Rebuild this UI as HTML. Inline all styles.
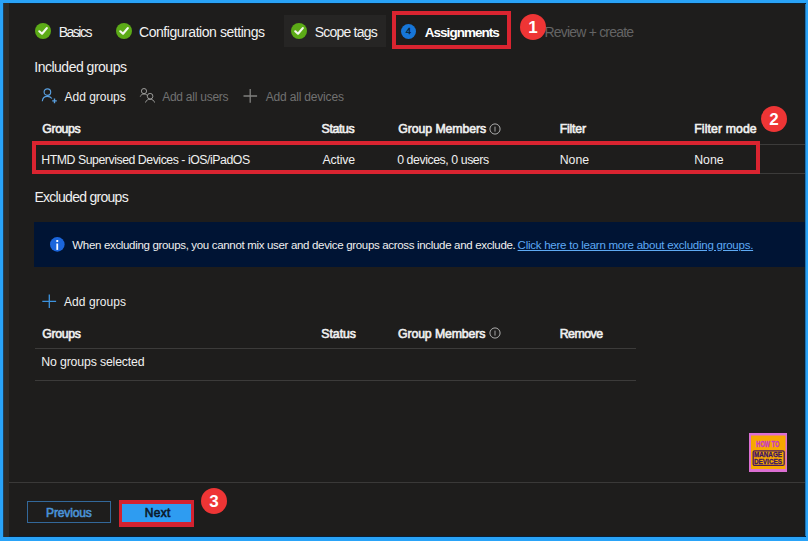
<!DOCTYPE html>
<html><head><meta charset="utf-8"><style>
html,body{margin:0;padding:0;}
body{width:808px;height:541px;background:#29a3f8;position:relative;overflow:hidden;font-family:"Liberation Sans",sans-serif;}
.t{position:absolute;white-space:nowrap;font-family:"Liberation Sans",sans-serif;}
.c{position:absolute;border-radius:50%;}
.b{position:absolute;}
.s{position:absolute;display:block;}
a{color:inherit;text-decoration:underline;}
</style></head><body>
<div class="b" style="left:3px;top:3px;width:803px;height:534px;background:#1e1d1c"></div>
<div class="b" style="left:804px;top:3px;width:1px;height:534px;background:#0c1e2c"></div>
<div class="b" style="left:805px;top:3px;width:1px;height:534px;background:#2a74ab"></div>
<div class="b" style="left:3px;top:3px;width:803px;height:1px;background:#0e2232"></div>
<div class="b" style="left:3px;top:536px;width:803px;height:1px;background:#07213a"></div>
<div class="b" style="left:3px;top:3px;width:1px;height:534px;background:#1c3d57"></div>
<div class="b" style="left:4px;top:3px;width:5px;height:534px;background:#2d2b28"></div>
<div class="b" style="left:284px;top:15px;width:102px;height:32px;background:#262524"></div>
<div class="c" style="left:34.80px;top:23.10px;width:16.40px;height:16.40px;background:#5cab17"></div><svg class="s" style="left:35.00px;top:23.30px" width="16" height="16" viewBox="0 0 16 16"><path d="M4.3 8.3 L7 10.7 L11.8 5.1" fill="none" stroke="#f4f8ee" stroke-width="2.2" stroke-linecap="round" stroke-linejoin="round"/></svg>
<div class="c" style="left:115.50px;top:23.10px;width:16.40px;height:16.40px;background:#5cab17"></div><svg class="s" style="left:115.70px;top:23.30px" width="16" height="16" viewBox="0 0 16 16"><path d="M4.3 8.3 L7 10.7 L11.8 5.1" fill="none" stroke="#f4f8ee" stroke-width="2.2" stroke-linecap="round" stroke-linejoin="round"/></svg>
<div class="c" style="left:291.10px;top:23.10px;width:16.40px;height:16.40px;background:#5cab17"></div><svg class="s" style="left:291.30px;top:23.30px" width="16" height="16" viewBox="0 0 16 16"><path d="M4.3 8.3 L7 10.7 L11.8 5.1" fill="none" stroke="#f4f8ee" stroke-width="2.2" stroke-linecap="round" stroke-linejoin="round"/></svg>
<div class="c" style="left:400.60px;top:23.60px;width:15.60px;height:15.60px;background:#1776d8"></div>
<div class="t" style="left:403.4px;top:24.6px;width:10px;text-align:center;font-size:9.5px;line-height:11px;font-weight:400;color:#0a1a2b;-webkit-text-stroke:0.3px #0a1a2b">4</div>
<div class="b" style="left:392px;top:11px;width:111px;height:30px;border:4px solid #da2430"></div>
<div class="b" style="left:35px;top:144px;width:770px;height:1px;background:#3c3b3a"></div>
<div class="b" style="left:35px;top:173px;width:770px;height:1px;background:#3c3b3a"></div>
<div class="b" style="left:35px;top:348px;width:601px;height:1px;background:#3c3b3a"></div>
<div class="b" style="left:35px;top:380px;width:601px;height:1px;background:#3c3b3a"></div>
<div class="b" style="left:9px;top:482px;width:796px;height:1px;background:#3a3938"></div>
<div class="b" style="left:32px;top:141px;width:720px;height:25px;border:4px solid #da2430"></div>
<div class="b" style="left:34px;top:222px;width:771px;height:45px;background:#001434"></div>
<svg class="s" style="left:49px;top:236px" width="17" height="17" viewBox="0 0 17 17"><circle cx="8.3" cy="8.4" r="7.3" fill="#1b66dc"/><rect x="7.2" y="3.9" width="2.1" height="2" rx="0.6" fill="#fff"/><rect x="7.35" y="7.5" width="1.8" height="6.4" fill="#fff"/></svg>
<svg class="s" style="left:488.5px;top:122.6px" width="12" height="12" viewBox="0 0 12 12"><circle cx="6" cy="6" r="5.1" fill="none" stroke="#b4b4b4" stroke-width="0.95"/><rect x="5.55" y="3.6" width="0.9" height="5" fill="#b4b4b4"/></svg>
<svg class="s" style="left:488.5px;top:327.4px" width="12" height="12" viewBox="0 0 12 12"><circle cx="6" cy="6" r="5.1" fill="none" stroke="#b4b4b4" stroke-width="0.95"/><rect x="5.55" y="3.6" width="0.9" height="5" fill="#b4b4b4"/></svg>
<svg class="s" style="left:41px;top:88px" width="17" height="16" viewBox="0 0 17 16"><circle cx="6.4" cy="4.1" r="3.3" fill="none" stroke="#5aa0e0" stroke-width="1.15"/><path d="M1.3 13.2 C1.6 9.9 3.7 8.3 6.4 8.3 C8.3 8.3 9.8 9.1 10.9 10.5" fill="none" stroke="#5aa0e0" stroke-width="1.15"/><path d="M13.5 10.6 v4.6 M11.2 12.9 h4.6" stroke="#5aa0e0" stroke-width="1.4"/></svg>
<svg class="s" style="left:139px;top:88px" width="17" height="16" viewBox="0 0 17 16"><circle cx="5" cy="3.1" r="2.6" fill="none" stroke="#9a9a98" stroke-width="1"/><path d="M1.3 8.6 C1.8 6.9 3.2 6 5 6 C6.2 6 7.2 6.4 8 7.1" fill="none" stroke="#9a9a98" stroke-width="1"/><circle cx="11.1" cy="8.2" r="2.8" fill="none" stroke="#9a9a98" stroke-width="1"/><path d="M6.5 14.5 C7 12.4 8.8 11.3 11.1 11.3 C13.4 11.3 15.1 12.4 15.5 14.5" fill="none" stroke="#9a9a98" stroke-width="1"/></svg>
<svg class="s" style="left:243px;top:89px" width="15" height="15" viewBox="0 0 15 15"><path d="M7.2 0 v13.8 M0.5 7 h13.6" stroke="#80807e" stroke-width="1.3"/></svg>
<svg class="s" style="left:42px;top:294px" width="15" height="15" viewBox="0 0 15 15"><path d="M7.3 0.5 v13.6 M0.3 7.3 h13.8" stroke="#3d93de" stroke-width="1.3"/></svg>
<div class="b" style="left:27px;top:501px;width:82px;height:20px;border:1px solid #33689a"></div>
<div class="b" style="left:119px;top:500px;width:75px;height:27px;background:#d42230"></div>
<div class="b" style="left:122px;top:504px;width:69px;height:18px;background:#2e9cf1"></div>
<svg class="s" style="left:749px;top:433px" width="38" height="39" viewBox="0 0 38 39"><rect x="0" y="0" width="38" height="39" fill="#dc6fd3"/><rect x="2" y="2.5" width="34.5" height="33.5" fill="#f7a800"/><text x="7" y="13.6" textLength="23.4" lengthAdjust="spacingAndGlyphs" font-family="Liberation Sans" font-weight="700" font-size="8.6" fill="#c83ac4" stroke="#c83ac4" stroke-width="0.35">HOW TO</text><rect x="4.2" y="17.8" width="31" height="14.6" rx="1.5" fill="none" stroke="#4a1a5a" stroke-width="1.3"/><text x="5" y="24.4" textLength="28" lengthAdjust="spacingAndGlyphs" font-family="Liberation Sans" font-weight="700" font-size="7" fill="#3c1466" stroke="#3c1466" stroke-width="0.3">MANAGE</text><text x="5" y="30.6" textLength="28" lengthAdjust="spacingAndGlyphs" font-family="Liberation Sans" font-weight="700" font-size="7" fill="#3c1466" stroke="#3c1466" stroke-width="0.3">DEVICES</text></svg>
<div class="t" style="left:58.70px;top:25.00px;font-size:14px;line-height:14px;font-weight:400;letter-spacing:-1.48px;color:#f2f2f2">Basics</div>
<div class="t" style="left:139.00px;top:25.00px;font-size:14px;line-height:14px;font-weight:400;letter-spacing:-0.448px;color:#f2f2f2">Configuration settings</div>
<div class="t" style="left:314.80px;top:25.00px;font-size:14px;line-height:14px;font-weight:400;letter-spacing:-0.8px;color:#f2f2f2">Scope tags</div>
<div class="t" style="left:424.80px;top:26.00px;font-size:13.5px;line-height:13.5px;font-weight:700;letter-spacing:-0.98px;color:#ffffff">Assignments</div>
<div class="t" style="left:544.50px;top:25.00px;font-size:14px;line-height:14px;font-weight:400;letter-spacing:-0.8px;color:#646464">Review + create</div>
<div class="t" style="left:34.30px;top:60.00px;font-size:14px;line-height:14px;font-weight:400;letter-spacing:-0.5px;color:#f0f0f0">Included groups</div>
<div class="t" style="left:64.60px;top:91.00px;font-size:12px;line-height:12px;font-weight:400;letter-spacing:-0.022px;color:#f0f0f0">Add groups</div>
<div class="t" style="left:162.20px;top:91.00px;font-size:12px;line-height:12px;font-weight:400;letter-spacing:-0.25px;color:#717171">Add all users</div>
<div class="t" style="left:265.80px;top:91.00px;font-size:12px;line-height:12px;font-weight:400;letter-spacing:-0.186px;color:#717171">Add all devices</div>
<div class="t" style="left:42.30px;top:123.00px;font-size:12.3px;line-height:12.3px;font-weight:400;-webkit-text-stroke:0.6px #f0f0f0;letter-spacing:-0.4px;color:#f0f0f0">Groups</div>
<div class="t" style="left:321.50px;top:123.00px;font-size:12.3px;line-height:12.3px;font-weight:400;-webkit-text-stroke:0.6px #f0f0f0;letter-spacing:-0.32px;color:#f0f0f0">Status</div>
<div class="t" style="left:398.20px;top:123.00px;font-size:12.3px;line-height:12.3px;font-weight:400;-webkit-text-stroke:0.6px #f0f0f0;letter-spacing:-0.067px;color:#f0f0f0">Group Members</div>
<div class="t" style="left:559.70px;top:123.00px;font-size:12.3px;line-height:12.3px;font-weight:400;-webkit-text-stroke:0.6px #f0f0f0;letter-spacing:-0.2px;color:#f0f0f0">Filter</div>
<div class="t" style="left:694.20px;top:123.00px;font-size:12.3px;line-height:12.3px;font-weight:400;-webkit-text-stroke:0.6px #f0f0f0;letter-spacing:0.1px;color:#f0f0f0">Filter mode</div>
<div class="t" style="left:41.30px;top:154.00px;font-size:12.3px;line-height:12.3px;font-weight:400;letter-spacing:-0.457px;color:#f0f0f0">HTMD Supervised Devices - iOS/iPadOS</div>
<div class="t" style="left:322.50px;top:154.00px;font-size:12.3px;line-height:12.3px;font-weight:400;letter-spacing:-0.2px;color:#f0f0f0">Active</div>
<div class="t" style="left:397.20px;top:154.00px;font-size:12.3px;line-height:12.3px;font-weight:400;letter-spacing:-0.424px;color:#f0f0f0">0 devices, 0 users</div>
<div class="t" style="left:559.70px;top:154.00px;font-size:12.3px;line-height:12.3px;font-weight:400;letter-spacing:0.0px;color:#f0f0f0">None</div>
<div class="t" style="left:694.20px;top:154.00px;font-size:12.3px;line-height:12.3px;font-weight:400;letter-spacing:0.0px;color:#f0f0f0">None</div>
<div class="t" style="left:34.40px;top:190.00px;font-size:14px;line-height:14px;font-weight:400;letter-spacing:-0.714px;color:#f0f0f0">Excluded groups</div>
<div class="t" style="left:72.30px;top:240.00px;font-size:11.5px;line-height:11.5px;font-weight:400;letter-spacing:-0.326px;color:#f0f0f0">When excluding groups, you cannot mix user and device groups across include and exclude.</div>
<div class="t" style="left:517.60px;top:240.00px;font-size:11.5px;line-height:11.5px;font-weight:400;letter-spacing:-0.247px;color:#5eaaf4"><span style="text-decoration:underline">Click here to learn more about excluding groups.</span></div>
<div class="t" style="left:64.00px;top:296.00px;font-size:12px;line-height:12px;font-weight:400;letter-spacing:0.067px;color:#f0f0f0">Add groups</div>
<div class="t" style="left:42.30px;top:328.00px;font-size:12.3px;line-height:12.3px;font-weight:400;-webkit-text-stroke:0.6px #f0f0f0;letter-spacing:-0.36px;color:#f0f0f0">Groups</div>
<div class="t" style="left:321.30px;top:328.00px;font-size:12.3px;line-height:12.3px;font-weight:400;-webkit-text-stroke:0.6px #f0f0f0;letter-spacing:-0.04px;color:#f0f0f0">Status</div>
<div class="t" style="left:398.00px;top:328.00px;font-size:12.3px;line-height:12.3px;font-weight:400;-webkit-text-stroke:0.6px #f0f0f0;letter-spacing:-0.117px;color:#f0f0f0">Group Members</div>
<div class="t" style="left:559.70px;top:328.00px;font-size:12.3px;line-height:12.3px;font-weight:400;-webkit-text-stroke:0.6px #f0f0f0;letter-spacing:-0.48px;color:#f0f0f0">Remove</div>
<div class="t" style="left:41.30px;top:356.00px;font-size:12.3px;line-height:12.3px;font-weight:400;letter-spacing:-0.153px;color:#f0f0f0">No groups selected</div>
<div class="t" style="left:46.10px;top:507.00px;font-size:12px;line-height:12px;font-weight:400;-webkit-text-stroke:0.6px #4a92d6;letter-spacing:-0.143px;color:#4a92d6">Previous</div>
<div class="t" style="left:144.70px;top:507.00px;font-size:12px;line-height:12px;font-weight:400;-webkit-text-stroke:0.6px #0b1a2b;letter-spacing:0.333px;color:#0b1a2b">Next</div>
<div class="c" style="left:519.90px;top:14.20px;width:26.20px;height:26.20px;background:#ee3535"></div><div class="t" style="left:520.00px;top:19.30px;width:26px;text-align:center;font-size:17px;line-height:18px;font-weight:700;color:#fff">1</div><div class="c" style="left:760.90px;top:105.90px;width:26.20px;height:26.20px;background:#ee3535"></div><div class="t" style="left:761.00px;top:111.00px;width:26px;text-align:center;font-size:17px;line-height:18px;font-weight:700;color:#fff">2</div><div class="c" style="left:200.90px;top:487.90px;width:26.20px;height:26.20px;background:#ee3535"></div><div class="t" style="left:201.00px;top:493.00px;width:26px;text-align:center;font-size:17px;line-height:18px;font-weight:700;color:#fff">3</div>
</body></html>
